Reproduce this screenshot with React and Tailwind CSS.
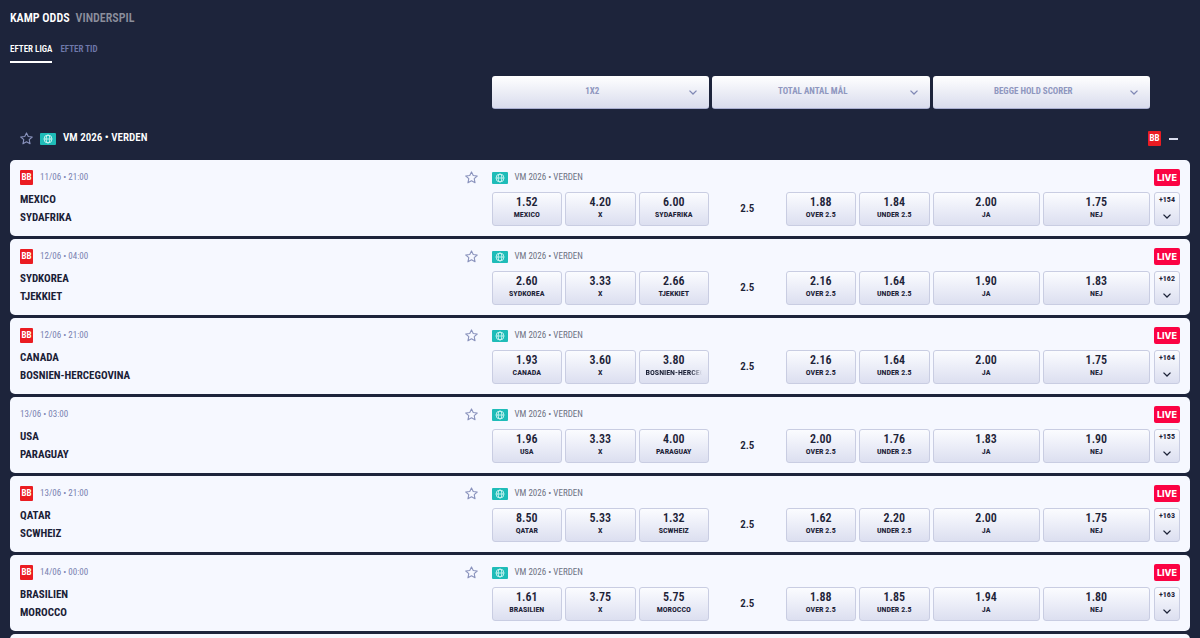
import { useState } from 'react';

const matches = [
  { date: '11/06 • 21:00', boosted: true, home: 'MEXICO', away: 'SYDAFRIKA', odds: ['1.52', '4.20', '6.00'], goals: ['1.88', '1.84'], both: ['2.00', '1.75'], more: 154 },
  { date: '12/06 • 04:00', boosted: true, home: 'SYDKOREA', away: 'TJEKKIET', odds: ['2.60', '3.33', '2.66'], goals: ['2.16', '1.64'], both: ['1.90', '1.83'], more: 162 },
  { date: '12/06 • 21:00', boosted: true, home: 'CANADA', away: 'BOSNIEN-HERCEGOVINA', odds: ['1.93', '3.60', '3.80'], goals: ['2.16', '1.64'], both: ['2.00', '1.75'], more: 164 },
  { date: '13/06 • 03:00', boosted: false, home: 'USA', away: 'PARAGUAY', odds: ['1.96', '3.33', '4.00'], goals: ['2.00', '1.76'], both: ['1.83', '1.90'], more: 155 },
  { date: '13/06 • 21:00', boosted: true, home: 'QATAR', away: 'SCWHEIZ', odds: ['8.50', '5.33', '1.32'], goals: ['1.62', '2.20'], both: ['2.00', '1.75'], more: 163 },
  { date: '14/06 • 00:00', boosted: true, home: 'BRASILIEN', away: 'MOROCCO', odds: ['1.61', '3.75', '5.75'], goals: ['1.88', '1.85'], both: ['1.94', '1.80'], more: 163 },
];

const markets = ['1X2', 'TOTAL ANTAL MÅL', 'BEGGE HOLD SCORER'];

function Star() {
  return (
    <svg className="h-[13px] w-[13px]" viewBox="0 0 12 12" fill="none" stroke="#8a93bd" strokeWidth="1" strokeLinejoin="round">
      <path d="M6 .8 7.6 4.2 11.3 4.6 8.5 7.1 9.3 10.9 6 9 2.7 10.9 3.5 7.1 .7 4.6 4.4 4.2Z" />
    </svg>
  );
}

function Chevron({ className }) {
  return (
    <svg className={className} viewBox="0 0 8 5" fill="none" stroke="currentColor" strokeWidth="1.3">
      <path d="M.5 .6 4 4 7.5 .6" />
    </svg>
  );
}

function WorldFlag() {
  return (
    <svg className="h-3 w-4 shrink-0" viewBox="0 0 16 12">
      <rect width="16" height="12" rx="1" fill="#1fbcb8" />
      <g fill="none" stroke="#e0fbf8" strokeWidth=".8">
        <circle cx="8" cy="6" r="4" />
        <ellipse cx="8" cy="6" rx="1.9" ry="4" />
        <path d="M4 6h8" />
      </g>
    </svg>
  );
}

function BetBuilderBadge() {
  return (
    <span className="flex h-[15px] w-[13px] items-start justify-center rounded-[1px] bg-[#eb1c22] text-[9px] leading-[14px] font-bold text-white">
      BB
    </span>
  );
}

function OddsButton({ price, label }) {
  const long = label.length > 13;
  return (
    <button className="flex h-[34px] min-w-0 flex-col items-center justify-start rounded-[3px] border border-[#c9cde2] bg-linear-to-b from-[#fbfcff] to-[#dcdff0] px-1.5 pt-0.5 text-[#1d2338]">
      <span className="text-[12px] leading-[14px] font-semibold">{price}</span>
      <span
        className={`w-full overflow-hidden text-[8px] leading-[12px] font-bold whitespace-nowrap ${
          long ? 'mask-r-from-80% text-left' : 'text-center'
        }`}
      >
        {label}
      </span>
    </button>
  );
}

function MatchCard({ match }) {
  const [favourite, setFavourite] = useState(false);

  return (
    <li className="grid grid-cols-[71fr_100fr_26px] gap-x-1 rounded-[5px] bg-[#f6f8ff] px-2.5 py-[9px]">
      <div className="flex min-w-0 flex-col">
        <div className="flex h-[17px] items-center gap-[7px] pr-2.5">
          {match.boosted && <BetBuilderBadge />}
          <time className="text-[9px] text-[#7881b0]">{match.date}</time>
          <button
            className="ml-auto"
            aria-label="Favorit"
            aria-pressed={favourite}
            onClick={() => setFavourite(!favourite)}
          >
            <Star />
          </button>
        </div>
        <div className="mt-[5px] text-[11px] leading-[18px] font-bold text-[#1a2036]">
          <p>{match.home}</p>
          <p>{match.away}</p>
        </div>
      </div>

      <div className="min-w-0">
        <div className="flex h-[17px] items-center gap-[7px] text-[9px] text-[#6d7283]">
          <WorldFlag />
          VM 2026 • VERDEN
        </div>
        <div className="mt-1.5 grid grid-cols-3 gap-[3px]">
          <div className="grid grid-cols-3 gap-[3px]">
            <OddsButton price={match.odds[0]} label={match.home} />
            <OddsButton price={match.odds[1]} label="X" />
            <OddsButton price={match.odds[2]} label={match.away} />
          </div>
          <div className="grid grid-cols-3 items-center gap-[3px]">
            <span className="text-center text-[11px] font-semibold text-[#1d2338]">2.5</span>
            <OddsButton price={match.goals[0]} label="OVER 2.5" />
            <OddsButton price={match.goals[1]} label="UNDER 2.5" />
          </div>
          <div className="grid grid-cols-2 gap-[3px]">
            <OddsButton price={match.both[0]} label="JA" />
            <OddsButton price={match.both[1]} label="NEJ" />
          </div>
        </div>
      </div>

      <div className="flex flex-col">
        <span className="flex h-[17px] items-center justify-center rounded-[2px] bg-[#fb0343] font-[Inter] text-[9px] font-extrabold text-white">
          LIVE
        </span>
        <button className="mt-1.5 flex h-[34px] flex-col items-center justify-between rounded-[3px] border border-[#c9cde2] bg-linear-to-b from-[#fbfcff] to-[#dcdff0] pb-1.5 text-[#1d2338]">
          <span className="text-[8px] leading-[13px] font-bold">+{match.more}</span>
          <Chevron className="h-[5px] w-2" />
        </button>
      </div>
    </li>
  );
}

function App() {
  const [open, setOpen] = useState(true);

  return (
    <div className="h-screen overflow-hidden bg-[#1d243b] px-2.5 font-['Liberation_Sans_Narrow','Roboto_Condensed','Open_Sans_Condensed',sans-serif]">
      <nav className="flex gap-1.5 pt-2 text-[12px] leading-5 font-semibold">
        <a href="#kamp" className="text-white">KAMP ODDS</a>
        <a href="#vinder" className="text-[#8b8e9b]">VINDERSPIL</a>
      </nav>

      <div className="mt-[13px] flex gap-2 text-[9px] leading-[17px] font-semibold">
        <button className="border-b-2 border-white pb-[3px] text-white">EFTER LIGA</button>
        <button className="border-b-2 border-transparent pb-[3px] text-[#6f79ab]">EFTER TID</button>
      </div>

      <div className="mt-[13px] grid grid-cols-[71fr_100fr_26px] gap-x-1 px-2.5">
        <div className="col-start-2 grid grid-cols-3 gap-[3px]">
          {markets.map((market) => (
            <div key={market} className="relative">
              <select
                aria-label={market}
                className="h-[33px] w-full appearance-none rounded-[3px] border-b border-[#a9aed0] bg-linear-to-b from-white to-[#d9dced] pr-4 text-center text-[9px] font-bold text-[#8f97bf]"
              >
                <option>{market}</option>
              </select>
              <Chevron className="pointer-events-none absolute top-3.5 right-3 h-[5px] w-2 text-[#8189b5]" />
            </div>
          ))}
        </div>
      </div>

      <section>
        <header className="flex h-[51px] items-center gap-[7px] px-2.5 pt-2">
          <button aria-label="Favorit">
            <Star />
          </button>
          <WorldFlag />
          <h2 className="text-[11px] font-semibold text-white">VM 2026 • VERDEN</h2>
          <div className="ml-auto flex items-center gap-2">
            <BetBuilderBadge />
            <button aria-label="Fold sammen" className="flex h-3 w-[11px] items-center" onClick={() => setOpen(!open)}>
              <span className="h-0.5 w-[9px] bg-[#d9dced]" />
            </button>
          </div>
        </header>

        {open && (
          <ul className="flex flex-col gap-[3px]">
            {matches.map((match) => (
              <MatchCard key={match.home} match={match} />
            ))}
            <li className="h-[76px] rounded-[5px] bg-[#f6f8ff]" />
          </ul>
        )}
      </section>
    </div>
  );
}

export default App;
